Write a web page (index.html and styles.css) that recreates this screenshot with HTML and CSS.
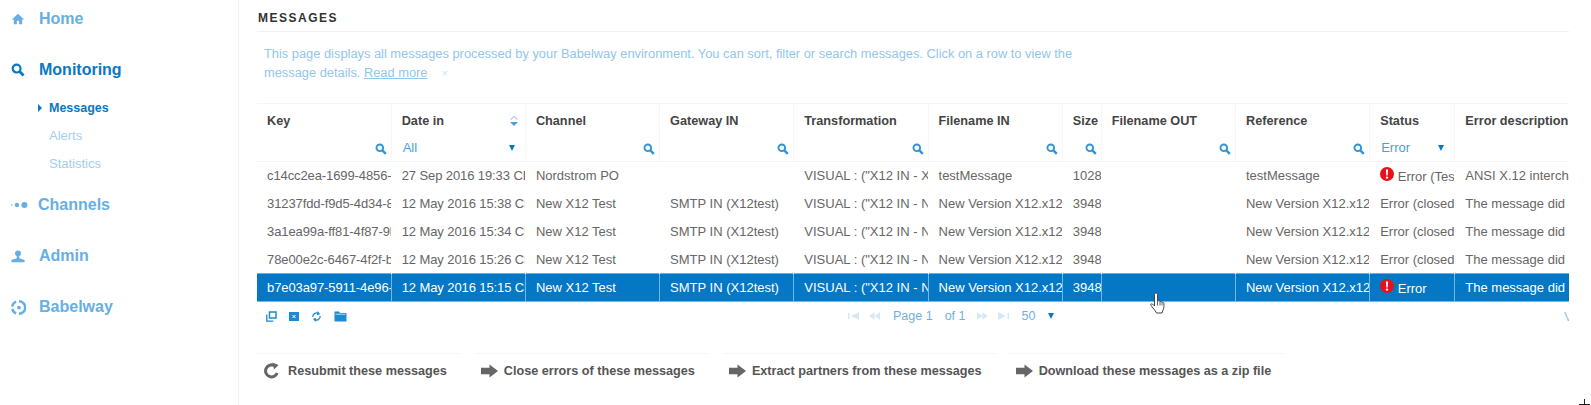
FILE: index.html
```html
<!DOCTYPE html>
<html lang="en">
  <head>
    <meta charset="utf-8" />
    <meta name="viewport" content="width=device-width, initial-scale=1" />
    <title>Messages</title>
    <link rel="stylesheet" href="styles.css">
  </head>
  <body>
    <svg class="defs" width="0" height="0">
      <symbol id="lens" viewBox="0 0 14 14"><circle cx="5.6" cy="5.6" r="3.9" fill="none" stroke="currentColor" stroke-width="2.2"/><path d="M8.600 8.600l4 4" stroke="currentColor" stroke-width="2.800"/></symbol>
      <symbol id="arrow" viewBox="0 0 18 16"><path d="M0 4.500h9V1l9 7-9 7v-3.500H0z" fill="currentColor"/></symbol>
      <symbol id="alert" viewBox="0 0 14 14"><circle cx="7" cy="7" r="7" fill="#e8101a"/><path d="M5.900 2.600h2.200L7.700 8.600H6.300z" fill="#fff"/><circle cx="7" cy="10.600" r="1.200" fill="#fff"/></symbol>
    </svg>

    <nav class="sidebar">
      <a class="nav-item">
        <svg class="nav-icon" viewBox="0 0 16 16"><path d="M8 2L1 8.500h2.200V14h3.500v-4h2.600v4h3.500V8.500H15z" fill="currentColor"/></svg>
        Home
      </a>
      <a class="nav-item active">
        <svg class="nav-icon" viewBox="0 0 14 14"><use href="#lens"/></svg>
        Monitoring
      </a>
      <div class="subnav">
        <a class="sub-item current">Messages</a>
        <a class="sub-item">Alerts</a>
        <a class="sub-item">Statistics</a>
      </div>
      <a class="nav-item">
        <svg class="nav-icon wide" viewBox="0 0 20 16"><circle cx=".7" cy="8" r=".8" fill="currentColor"/><circle cx="6.500" cy="8" r="2.500" fill="currentColor"/><circle cx="15" cy="8" r="3.500" fill="currentColor"/></svg>
        Channels
      </a>
      <a class="nav-item">
        <svg class="nav-icon" viewBox="0 0 16 16"><circle cx="8" cy="5" r="3.400" fill="currentColor"/><path d="M6.500 7h3v3.500l6 2V15H.5v-2.500l6-2z" fill="currentColor"/></svg>
        Admin
      </a>
      <a class="nav-item">
        <svg class="nav-icon brand" viewBox="0 0 16 16"><path d="M5.500 1.800A6.700 6.700 0 0 0 1.300 7M1.400 9.500A6.700 6.700 0 0 0 5.500 14.200" fill="none" stroke="currentColor" stroke-width="2.600"/><path d="M8.500 1.300A6.700 6.700 0 0 1 8.500 14.700" fill="none" stroke="currentColor" stroke-width="2.600"/><circle cx="8.500" cy="8" r="2" fill="currentColor"/></svg>
        Babelway
      </a>
    </nav>

    <main class="content">
      <h1 class="title">MESSAGES</h1>
      <p class="intro">This page displays all messages processed by your Babelway environment. You can sort, filter or search messages. Click on a row to view the message details. <u>Read more</u><span class="close">×</span></p>

      <div class="table-wrap">
        <table class="grid">
          <colgroup>
            <col class="c-key"><col class="c-date"><col class="c-chan"><col class="c-gate"><col class="c-trans"><col class="c-file"><col class="c-size"><col class="c-out"><col class="c-ref"><col class="c-status"><col class="c-err">
          </colgroup>
          <thead>
            <tr class="head">
              <th>Key</th>
              <th><span class="sort-wrap">Date in<svg class="sort" viewBox="0 0 10 12"><path d="M1.500 4.500L5 1.500l3.500 3" fill="none" stroke="#a9d3ef" stroke-width="1.300"/><path d="M1 7l4 4 4-4z" fill="#4b9fd8"/></svg></span></th>
              <th>Channel</th>
              <th>Gateway IN</th>
              <th>Transformation</th>
              <th>Filename IN</th>
              <th>Size</th>
              <th>Filename OUT</th>
              <th>Reference</th>
              <th>Status</th>
              <th>Error description</th>
            </tr>
            <tr class="filters">
              <td><svg class="lens"><use href="#lens"/></svg></td>
              <td><span class="pick">All<i class="tri"></i></span></td>
              <td><svg class="lens"><use href="#lens"/></svg></td>
              <td><svg class="lens"><use href="#lens"/></svg></td>
              <td><svg class="lens"><use href="#lens"/></svg></td>
              <td><svg class="lens"><use href="#lens"/></svg></td>
              <td><svg class="lens"><use href="#lens"/></svg></td>
              <td><svg class="lens"><use href="#lens"/></svg></td>
              <td><svg class="lens"><use href="#lens"/></svg></td>
              <td><span class="pick">Error<i class="tri"></i></span></td>
              <td></td>
            </tr>
          </thead>
          <tbody>
            <tr>
              <td>c14cc2ea-1699-4856-a</td><td>27 Sep 2016 19:33 CEST</td><td>Nordstrom PO</td><td></td><td>VISUAL : ("X12 IN - X12</td><td>testMessage</td><td>1028</td><td></td><td>testMessage</td><td><svg class="alert"><use href="#alert"/></svg> Error (Test)</td><td>ANSI X.12 interchange</td>
            </tr>
            <tr>
              <td>31237fdd-f9d5-4d34-8a</td><td>12 May 2016 15:38 CEST</td><td>New X12 Test</td><td>SMTP IN (X12test)</td><td>VISUAL : ("X12 IN - N</td><td>New Version X12.x12</td><td>3948</td><td></td><td>New Version X12.x12</td><td>Error (closed)</td><td>The message did not</td>
            </tr>
            <tr>
              <td>3a1ea99a-ff81-4f87-9b</td><td>12 May 2016 15:34 CEST</td><td>New X12 Test</td><td>SMTP IN (X12test)</td><td>VISUAL : ("X12 IN - N</td><td>New Version X12.x12</td><td>3948</td><td></td><td>New Version X12.x12</td><td>Error (closed)</td><td>The message did not</td>
            </tr>
            <tr>
              <td>78e00e2c-6467-4f2f-b1</td><td>12 May 2016 15:26 CEST</td><td>New X12 Test</td><td>SMTP IN (X12test)</td><td>VISUAL : ("X12 IN - N</td><td>New Version X12.x12</td><td>3948</td><td></td><td>New Version X12.x12</td><td>Error (closed)</td><td>The message did not</td>
            </tr>
            <tr class="selected">
              <td>b7e03a97-5911-4e96-a</td><td>12 May 2016 15:15 CEST</td><td>New X12 Test</td><td>SMTP IN (X12test)</td><td>VISUAL : ("X12 IN - N</td><td>New Version X12.x12</td><td>3948</td><td></td><td>New Version X12.x12</td><td><svg class="alert"><use href="#alert"/></svg> Error</td><td>The message did not</td>
            </tr>
          </tbody>
        </table>
        <!-- mouse pointer from the capture -->
        <svg class="hand" viewBox="0 0 16 22"><path d="M6 1c1 0 1.500.7 1.500 1.800V9l1-.2c.9-.1 1.400.2 1.600.8.900-.3 1.600 0 1.900.8.900-.3 1.800.1 1.900 1.100.2 2.300.1 4.500-.8 6.400L12 21H6.500l-1.500-2.500-4-5c-.7-1.200.5-2.300 1.600-1.400L4.500 14V2.800C4.500 1.700 5 1 6 1z" fill="#fff" stroke="#444" stroke-width="1"/><path d="M7.500 9v4.500M10 9.500v4M12 10.500v3" stroke="#444" stroke-width=".8"/></svg>
      </div>

      <div class="tools">
        <div class="tool-icons">
          <svg class="ti" viewBox="0 0 11 11"><path d="M3.500 1h6.500v6H3.500z" fill="none" stroke="currentColor" stroke-width="1.500"/><path d="M.8 3.500v6.700h6.500" fill="none" stroke="currentColor" stroke-width="1.300"/></svg>
          <svg class="ti small" viewBox="0 0 10 11"><rect y="1" width="10" height="9" fill="currentColor"/><path d="M3.500 4l3 3m0-3l-3 3" stroke="#fff" stroke-width="1"/></svg>
          <svg class="ti" viewBox="0 0 12 12"><path d="M2 6.500a4 4 0 0 1 6.500-3.500M10 5.500A4 4 0 0 1 3.500 9" fill="none" stroke="currentColor" stroke-width="1.400"/><path d="M7 0l3 3.500-3.500 1zM5 12L2 8.500l3.500-1z" fill="currentColor"/></svg>
          <svg class="ti big" viewBox="0 0 13 11"><path d="M.5 .5h4.500l1 1.500h6.500v8.500H.5z" fill="currentColor"/><path d="M1.500 3.200h10" stroke="#fff" stroke-width=".7"/></svg>
        </div>
        <div class="pager">
          <svg class="step" viewBox="0 0 11 8"><path d="M0 1h1.500v6H0zM11 0v8L3 4z" fill="currentColor"/></svg>
          <svg class="step" viewBox="0 0 12 8"><path d="M6 0v8L0 4zM12 0v8L6 4z" fill="currentColor"/></svg>
          <span class="page first">Page 1</span>
          <span class="page">of 1</span>
          <svg class="step" viewBox="0 0 12 8"><path d="M0 0v8l6-4zM6 0v8l6-4z" fill="currentColor"/></svg>
          <svg class="step" viewBox="0 0 11 8"><path d="M0 0v8l8-4zM9.500 1H11v6H9.500z" fill="currentColor"/></svg>
          <span class="page size">50</span><i class="tri"></i>
        </div>
        <span class="view">View</span>
      </div>

      <div class="actions">
        <a class="action"><svg class="act-icon" viewBox="0 0 16 16"><path d="M13.200 10.500A6 6 0 1 1 10 2.900" fill="none" stroke="currentColor" stroke-width="3"/><path d="M8.500 0l6 2.500-4.500 4.500z" fill="currentColor"/></svg>Resubmit these messages</a>
        <a class="action"><svg class="act-arrow"><use href="#arrow"/></svg>Close errors of these messages</a>
        <a class="action"><svg class="act-arrow"><use href="#arrow"/></svg>Extract partners from these messages</a>
        <a class="action"><svg class="act-arrow"><use href="#arrow"/></svg>Download these messages as a zip file</a>
      </div>
    </main>

    <div class="corner"></div>
  </body>
</html>
```

FILE: styles.css
```css
html, body {
  margin: 0;
  height: 405px;
  overflow: hidden;
}

body {
  display: flex;
  font-family: "Liberation Sans", Arial, sans-serif;
  font-size: 13px;
  color: #555;
  background: #fff;
}

.defs {
  position: absolute;
}

/* left menu */
.sidebar {
  width: 239px;
  height: 405px;
  flex: none;
  box-sizing: border-box;
  border-right: 1px solid #f1f1f1;
  padding-top: 9px;
}

.nav-item {
  display: flex;
  align-items: center;
  height: 20px;
  margin-bottom: 31px;
  font-size: 16px;
  font-weight: bold;
  color: #67afe3;
}

.nav-item.active {
  color: #0a78c2;
}

.nav-icon {
  width: 14px;
  height: 14px;
  margin: 0 14px 0 11px;
  flex: none;
}

.nav-icon.wide {
  width: 20px;
  margin: 0 8px 0 10px;
}

.nav-icon.brand {
  width: 15px;
  height: 15px;
  margin-right: 13px;
}

.subnav {
  margin: -12px 0 12px 49px;
}

.sub-item {
  display: block;
  height: 28px;
  line-height: 18px;
  font-size: 13px;
  color: #a3cfee;
  position: relative;
}

.sub-item.current {
  font-size: 12.500px;
  font-weight: bold;
  color: #0a78c2;
}

.sub-item.current::before {
  content: "";
  position: absolute;
  left: -11px;
  top: 5px;
  border-left: 4px solid #0a78c2;
  border-top: 4px solid transparent;
  border-bottom: 4px solid transparent;
}

/* main area */
.content {
  width: 1312px;
  margin-left: 18px;
  flex: none;
}

.title {
  margin: 0;
  height: 32px;
  box-sizing: border-box;
  padding: 11px 0 0 1px;
  font-size: 12px;
  line-height: 14px;
  letter-spacing: 1.500px;
  color: #333;
  border-bottom: 1px solid #f1f1f1;
}

.intro {
  width: 820px;
  margin: 12px 0 0 7px;
  font-size: 12.850px;
  line-height: 19px;
  color: #92c6ea;
}

.close {
  margin-left: 14px;
  font-size: 11px;
  color: #cfe5f5;
}

.table-wrap {
  position: relative;
  margin-top: 20px;
  width: 1312px;
}

.grid {
  table-layout: fixed;
  border-collapse: collapse;
  width: 1312px;
}

.c-key, .c-date, .c-chan, .c-gate, .c-file, .c-out { width: 134px; }
.c-trans { width: 134px; }
.c-size { width: 39px; }
.c-ref { width: 134px; }
.c-status { width: 85px; }
.c-err { width: 114px; }

.grid th, .grid td {
  padding: 0 0 0 10px;
  overflow: hidden;
  white-space: nowrap;
  text-align: left;
  border-right: 1px solid #f6f6f6;
}

.grid th:last-child, .grid td:last-child {
  border-right: 0;
}

.head th {
  height: 33px;
  font-size: 12.700px;
  font-weight: bold;
  color: #444;
  border-top: 1px solid #f6f6f6;
}

.filters td {
  height: 21px;
  padding: 0 4px 3px 9px;
  text-align: right;
  color: #4b9fd8;
  border-bottom: 1px solid #f3f3f3;
}

.lens {
  width: 12px;
  height: 12px;
  color: #2f94d6;
  vertical-align: middle;
}

.pick {
  display: flex;
  justify-content: space-between;
  align-items: center;
  text-align: left;
  padding: 0 6px 0 2px;
}

.tri {
  display: inline-block;
  border-top: 6px solid #0a78c2;
  border-left: 3.500px solid transparent;
  border-right: 3.500px solid transparent;
}

.sort-wrap {
  display: flex;
  justify-content: space-between;
  align-items: center;
  padding-right: 6px;
}

.sort {
  width: 10px;
  height: 12px;
}

.grid tbody td {
  height: 28px;
  box-sizing: border-box;
  font-size: 13px;
  color: #666;
  border-right-color: #fff;
}

.grid tbody td:nth-child(-n+2) {
  letter-spacing: -.1px;
}

.grid tbody tr.selected td {
  color: #fff;
  background: #0477c5;
  border: 1px solid #6fb8e8;
  border-left: 0;
  border-top-color: #5fb0e6;
}

.grid tbody tr.selected td:last-child {
  border-right: 0;
}

.alert {
  width: 14px;
  height: 14px;
  vertical-align: 0;
}

.hand {
  position: absolute;
  left: 893px;
  top: 189px;
  width: 16px;
  height: 22px;
}

/* under the table */
.tools {
  display: flex;
  align-items: center;
  height: 28px;
  position: relative;
  color: #1f8ad2;
}

.tool-icons {
  display: flex;
  gap: 12px;
  margin-left: 9px;
}

.ti {
  width: 11px;
  height: 11px;
}

.ti.small {
  width: 10px;
}

.ti.big {
  width: 13px;
}

.pager {
  display: flex;
  align-items: center;
  margin-left: 501px;
  color: #6fb0df;
}

.step {
  width: 11px;
  height: 8px;
  margin-right: 10px;
  color: #d5e8f6;
}

.page {
  font-size: 12.500px;
  margin-right: 12px;
}

.page.first {
  margin-left: 3px;
}

.page.size {
  margin: 0 13px 0 2px;
}

.view {
  position: absolute;
  right: 0;
  color: #92c6ea;
  width: 5px;
  overflow: hidden;
}

.actions {
  display: flex;
  gap: 13px;
  margin-top: 23px;
  color: #555;
}

.action {
  display: flex;
  align-items: center;
  height: 33px;
  padding: 0 14px 0 7px;
  font-size: 12.650px;
  font-weight: bold;
  border-top: 1px solid #f6f6f6;
}

.act-icon {
  width: 16px;
  height: 17px;
  margin-right: 8px;
  color: #666;
}

.act-arrow {
  width: 17px;
  height: 16px;
  margin-right: 6px;
  color: #666;
}

.corner {
  position: absolute;
  right: 1px;
  bottom: 0;
  width: 11px;
  height: 5px;
  border-bottom: 1px solid #222;
}

.corner::after {
  content: "";
  position: absolute;
  left: 5px;
  bottom: -1px;
  height: 6px;
  border-left: 1px solid #222;
}
```
